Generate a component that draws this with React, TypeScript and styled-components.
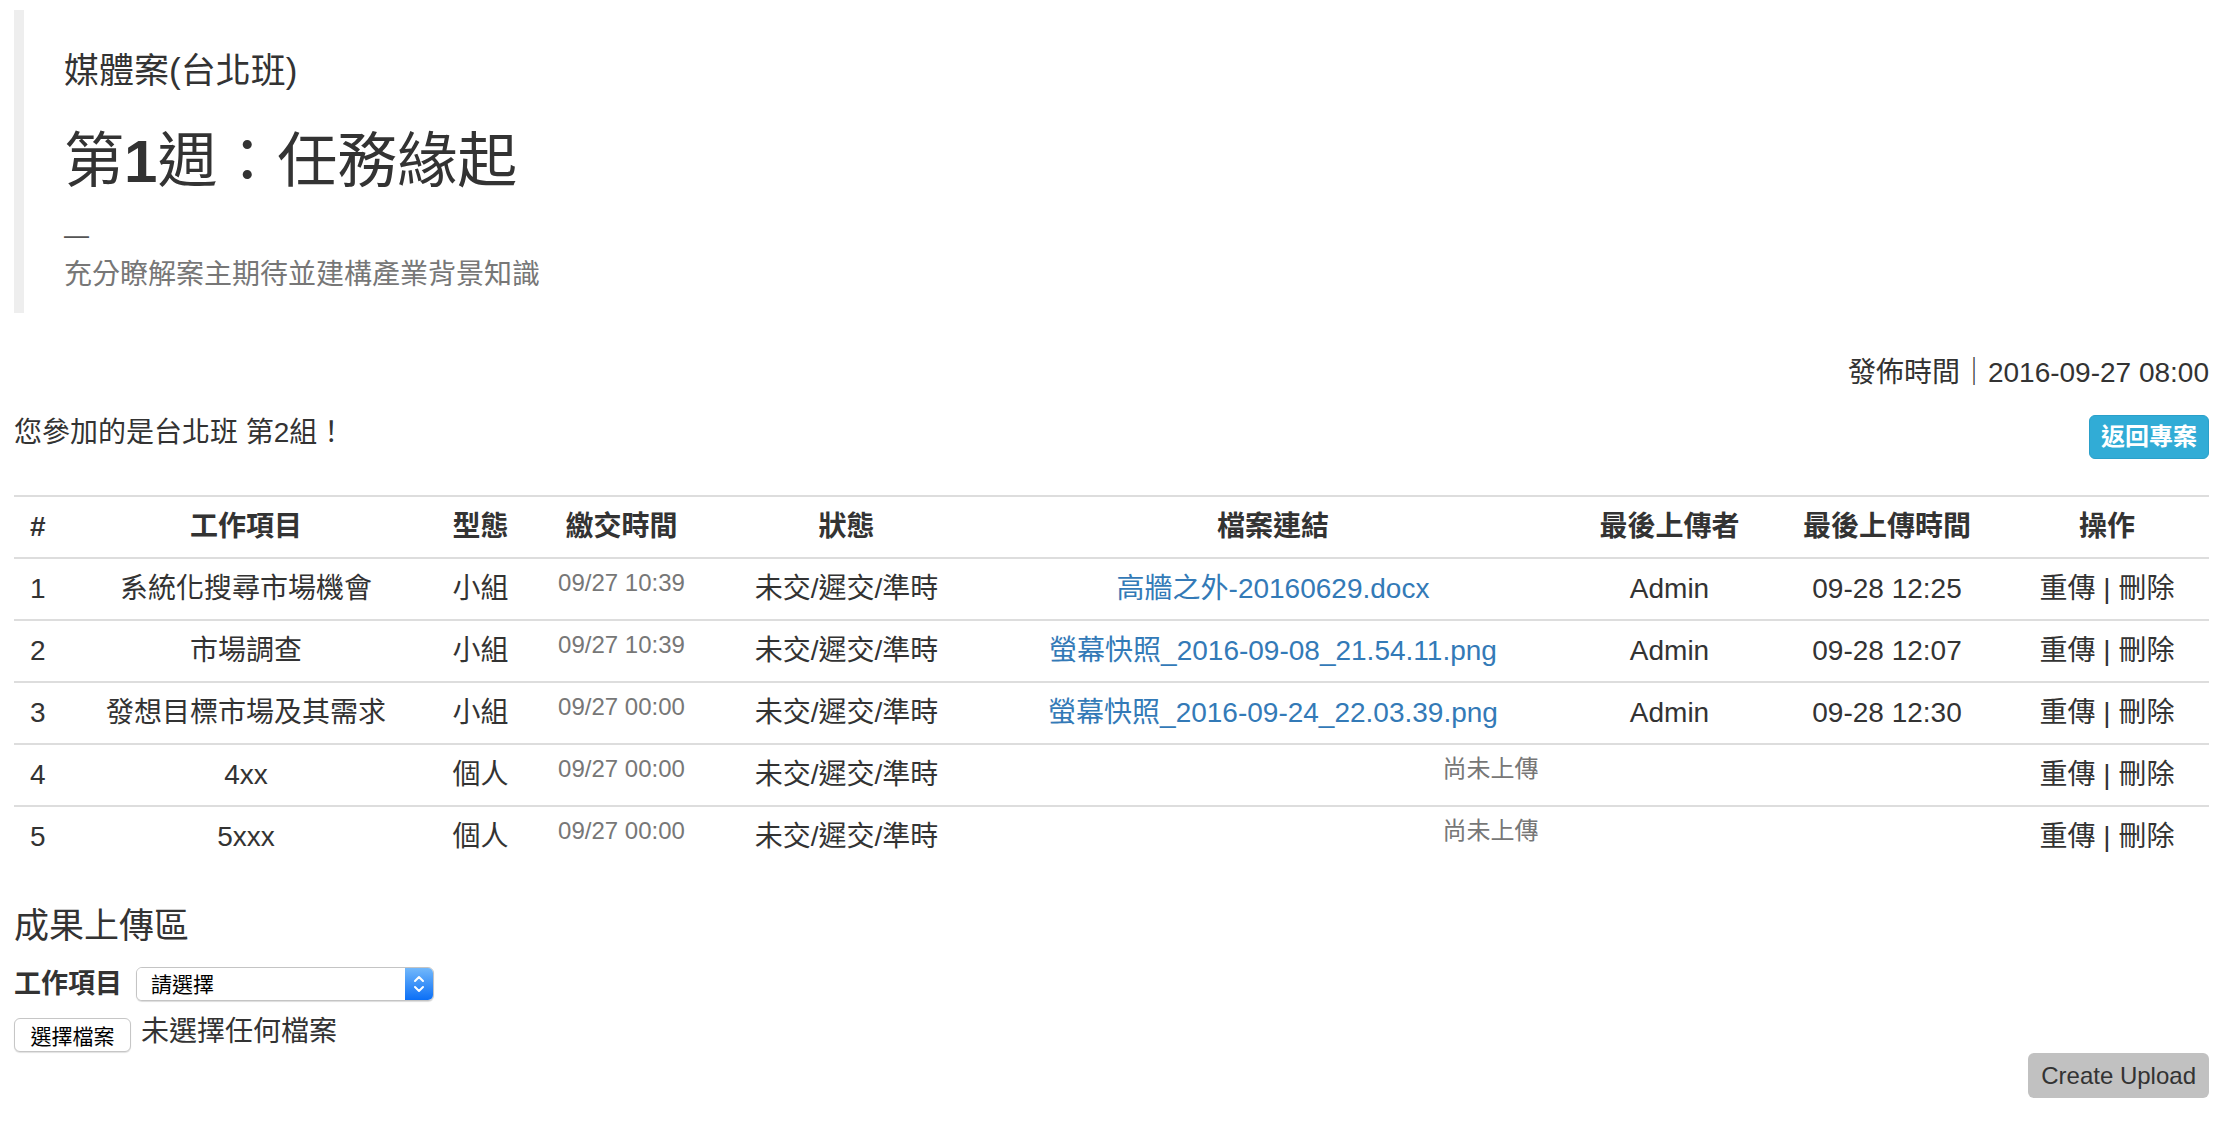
import React from "react";
import styled, { createGlobalStyle } from "styled-components";

const GlobalStyle = createGlobalStyle`
  html, body {
    margin: 0;
    padding: 0;
    background: #ffffff;
  }
  body {
    font-family: "Liberation Sans", "Noto Sans CJK TC", sans-serif;
    color: #333333;
    font-size: 28px;
    line-height: 40px;
  }
  * { box-sizing: border-box; }
`;

const Page = styled.div`
  padding: 10px 21px 0 14px;
`;

const Quote = styled.blockquote`
  margin: 0;
  border-left: 10px solid #eeeeee;
  padding: 20px 40px 18px 40px;
`;

const Course = styled.h3`
  margin: 22px 0 0;
  font-size: 35px;
  font-weight: 400;
  line-height: 38px;
`;

const WeekTitle = styled.h2`
  margin: 39px 0 0;
  font-size: 60px;
  font-weight: 400;
  line-height: 66px;
`;

const Strong = styled.span`
  font-weight: 700;
`;

const QuoteFooter = styled.footer`
  margin-top: 20px;
  color: #777777;
  font-size: 28px;
  line-height: 40px;
`;

const Dash = styled.div`
  font-size: 25px;
  line-height: 40px;
  height: 40px;
  color: #555555;
`;

const MetaRow = styled.div`
  display: flex;
  justify-content: flex-end;
  margin-top: 40px;
  line-height: 40px;
`;

const GroupRow = styled.div`
  display: flex;
  justify-content: space-between;
  align-items: flex-start;
  margin-top: 20px;
`;

const GroupText = styled.div`
  line-height: 40px;
`;

const InfoButton = styled.button`
  margin-top: 2px;
  height: 44px;
  padding: 0 11px;
  background: #31acd6;
  border: 1px solid #2aa0ca;
  border-radius: 6px;
  color: #ffffff;
  font-family: "Liberation Sans", "Noto Sans CJK TC", sans-serif;
  font-size: 24px;
  font-weight: 700;
  line-height: 42px;
`;

const Table = styled.table`
  width: 100%;
  margin-top: 36px;
  border-collapse: collapse;
  table-layout: fixed;
`;

const Th = styled.th`
  border-top: 2px solid #dddddd;
  padding: 10px 16px;
  font-size: 28px;
  font-weight: 700;
  line-height: 40px;
  text-align: center;
  white-space: nowrap;
`;

const Td = styled.td`
  border-top: 2px solid #dddddd;
  padding: 10px 16px;
  font-size: 28px;
  font-weight: 400;
  line-height: 40px;
  text-align: center;
  vertical-align: top;
  white-space: nowrap;
`;

const Muted = styled.span`
  display: inline-block;
  vertical-align: top;
  color: #777777;
  font-size: 24px;
  line-height: 28px;
`;

const FileLink = styled.a`
  color: #337ab7;
  text-decoration: none;
`;

const UploadHeading = styled.h4`
  margin: 39px 0 0;
  font-size: 35px;
  font-weight: 400;
  line-height: 40px;
`;

const FieldRow = styled.div`
  display: flex;
  align-items: center;
  gap: 14px;
  margin-top: 18px;
`;

const FieldLabel = styled.label`
  font-size: 27px;
  font-weight: 700;
  line-height: 40px;
`;

const SelectBox = styled.div`
  display: flex;
  width: 298px;
  height: 34px;
  border: 1px solid #c4c4c4;
  border-radius: 6px;
  overflow: hidden;
  box-shadow: 0 1px 1px rgba(0, 0, 0, 0.14);
  background: #ffffff;
`;

const NativeSelect = styled.select`
  appearance: none;
  -webkit-appearance: none;
  flex: 1;
  border: none;
  outline: none;
  background: #ffffff;
  padding: 0 0 0 14px;
  font-family: "Liberation Sans", "Noto Sans CJK TC", sans-serif;
  font-size: 21px;
  color: #000000;
`;

const ArrowBox = styled.div`
  width: 28px;
  display: flex;
  align-items: center;
  justify-content: center;
  background: linear-gradient(#72b8fb, #0b6ff6);
`;

const FileRow = styled.div`
  display: flex;
  align-items: center;
  gap: 10px;
  margin-top: 14px;
`;

const FileButton = styled.button`
  width: 117px;
  height: 34px;
  padding: 0;
  border: 1px solid #c6c6c6;
  border-radius: 6px;
  background: #ffffff;
  box-shadow: 0 1px 1px rgba(0, 0, 0, 0.12);
  font-family: "Liberation Sans", "Noto Sans CJK TC", sans-serif;
  font-size: 21px;
  color: #000000;
`;

const FileStatus = styled.span`
  font-size: 28px;
  line-height: 34px;
  margin-top: -6px;
`;

const ActionRow = styled.div`
  display: flex;
  justify-content: flex-end;
  margin-top: 1px;
`;

const CreateButton = styled.button`
  height: 45px;
  padding: 0 13px;
  border: none;
  border-radius: 6px;
  background: #c1c1c1;
  color: #333333;
  font-family: "Liberation Sans", "Noto Sans CJK TC", sans-serif;
  font-size: 24px;
`;

type Row = {
  no: number;
  item: string;
  kind: string;
  due: string;
  file?: string;
  uploader?: string;
  uploadedAt?: string;
};

const rows: Row[] = [
  { no: 1, item: "系統化搜尋市場機會", kind: "小組", due: "09/27 10:39", file: "高牆之外-20160629.docx", uploader: "Admin", uploadedAt: "09-28 12:25" },
  { no: 2, item: "市場調查", kind: "小組", due: "09/27 10:39", file: "螢幕快照_2016-09-08_21.54.11.png", uploader: "Admin", uploadedAt: "09-28 12:07" },
  { no: 3, item: "發想目標市場及其需求", kind: "小組", due: "09/27 00:00", file: "螢幕快照_2016-09-24_22.03.39.png", uploader: "Admin", uploadedAt: "09-28 12:30" },
  { no: 4, item: "4xx", kind: "個人", due: "09/27 00:00" },
  { no: 5, item: "5xxx", kind: "個人", due: "09/27 00:00" },
];

const colWidths = [43, 378, 91, 191, 259, 594, 199, 236, 204];

const Chevrons = () => (
  <svg width="14" height="22" viewBox="0 0 14 22" fill="none">
    <path d="M3 8 L7 4 L11 8" stroke="#ffffff" strokeWidth="2" strokeLinecap="round" strokeLinejoin="round" />
    <path d="M3 14 L7 18 L11 14" stroke="#ffffff" strokeWidth="2" strokeLinecap="round" strokeLinejoin="round" />
  </svg>
);

export default function App() {
  return (
    <Page>
      <GlobalStyle />
      <Quote>
        <Course>媒體案(台北班)</Course>
        <WeekTitle>
          第<Strong>1</Strong>週：任務緣起
        </WeekTitle>
        <QuoteFooter>
          <Dash>—</Dash>
          <div>充分瞭解案主期待並建構產業背景知識</div>
        </QuoteFooter>
      </Quote>

      <MetaRow>發佈時間｜2016-09-27 08:00</MetaRow>

      <GroupRow>
        <GroupText>您參加的是台北班 第2組！</GroupText>
        <InfoButton>返回專案</InfoButton>
      </GroupRow>

      <Table>
        <colgroup>
          {colWidths.map((w, i) => (
            <col key={i} style={{ width: `${w}px` }} />
          ))}
        </colgroup>
        <thead>
          <tr>
            <Th>#</Th>
            <Th>工作項目</Th>
            <Th>型態</Th>
            <Th>繳交時間</Th>
            <Th>狀態</Th>
            <Th>檔案連結</Th>
            <Th>最後上傳者</Th>
            <Th>最後上傳時間</Th>
            <Th>操作</Th>
          </tr>
        </thead>
        <tbody>
          {rows.map((r) => (
            <tr key={r.no}>
              <Td>{r.no}</Td>
              <Td>{r.item}</Td>
              <Td>{r.kind}</Td>
              <Td>
                <Muted>{r.due}</Muted>
              </Td>
              <Td>未交/遲交/準時</Td>
              {r.file ? (
                <>
                  <Td>
                    <FileLink href="#">{r.file}</FileLink>
                  </Td>
                  <Td>{r.uploader}</Td>
                  <Td>{r.uploadedAt}</Td>
                </>
              ) : (
                <Td colSpan={3}>
                  <Muted>尚未上傳</Muted>
                </Td>
              )}
              <Td>重傳 | 刪除</Td>
            </tr>
          ))}
        </tbody>
      </Table>

      <UploadHeading>成果上傳區</UploadHeading>

      <FieldRow>
        <FieldLabel>工作項目</FieldLabel>
        <SelectBox>
          <NativeSelect defaultValue="">
            <option value="">請選擇</option>
          </NativeSelect>
          <ArrowBox>
            <Chevrons />
          </ArrowBox>
        </SelectBox>
      </FieldRow>

      <FileRow>
        <FileButton>選擇檔案</FileButton>
        <FileStatus>未選擇任何檔案</FileStatus>
      </FileRow>

      <ActionRow>
        <CreateButton>Create Upload</CreateButton>
      </ActionRow>
    </Page>
  );
}
